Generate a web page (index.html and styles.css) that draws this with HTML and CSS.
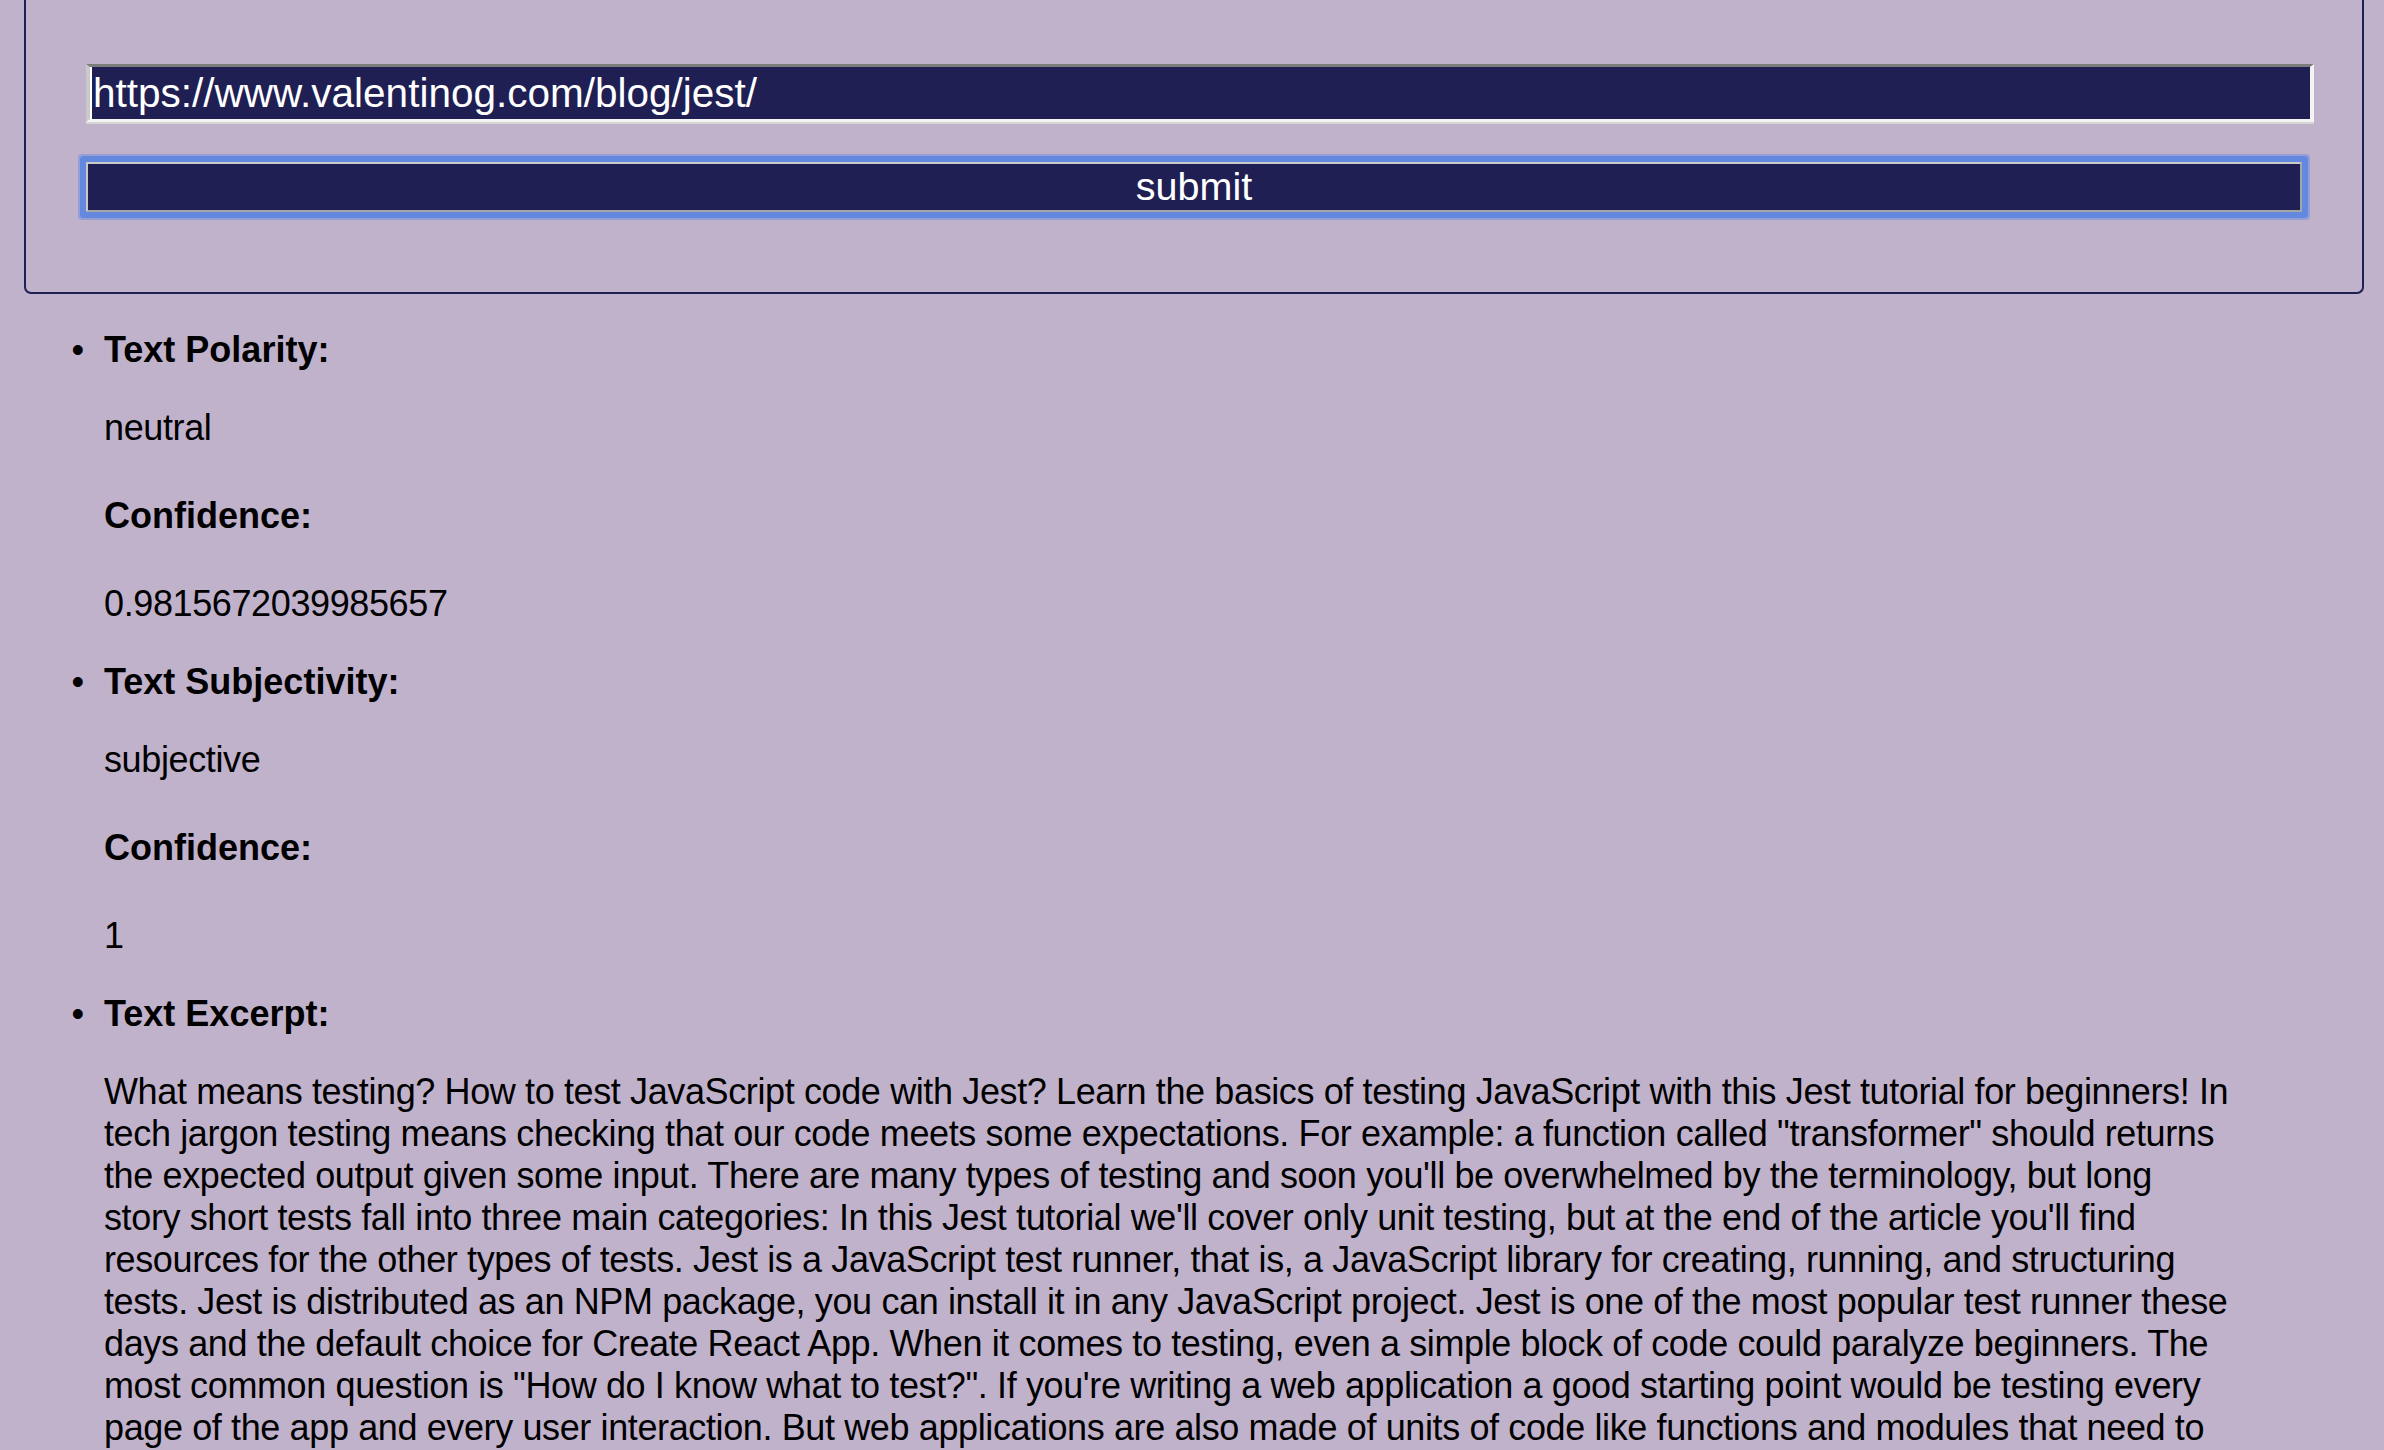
FILE: index.html
```html
<!DOCTYPE html>
<html lang="en">
<head>
<meta charset="utf-8">
<title>Sentiment Analysis</title>
<link rel="stylesheet" href="styles.css">
</head>
<body>
<form class="search-form">
  <fieldset class="panel">
    <input class="url-input" type="text" value="https://www.valentinog.com/blog/jest/">
    <button class="submit-btn" type="button">submit</button>
  </fieldset>
</form>
<ul class="results">
  <li class="result-item">
    <strong class="result-label">Text Polarity:</strong>
    <p class="result-value">neutral</p>
    <h4 class="result-sub">Confidence:</h4>
    <p class="result-value">0.9815672039985657</p>
  </li>
  <li class="result-item">
    <strong class="result-label">Text Subjectivity:</strong>
    <p class="result-value">subjective</p>
    <h4 class="result-sub">Confidence:</h4>
    <p class="result-value">1</p>
  </li>
  <li class="result-item">
    <strong class="result-label">Text Excerpt:</strong>
    <p class="result-value excerpt">What means testing? How to test JavaScript code with Jest? Learn the basics of testing JavaScript with this Jest tutorial for beginners! In tech jargon testing means checking that our code meets some expectations. For example: a function called "transformer" should returns the expected output given some input. There are many types of testing and soon you'll be overwhelmed by the terminology, but long story short tests fall into three main categories: In this Jest tutorial we'll cover only unit testing, but at the end of the article you'll find resources for the other types of tests. Jest is a JavaScript test runner, that is, a JavaScript library for creating, running, and structuring tests. Jest is distributed as an NPM package, you can install it in any JavaScript project. Jest is one of the most popular test runner these days and the default choice for Create React App. When it comes to testing, even a simple block of code could paralyze beginners. The most common question is "How do I know what to test?". If you're writing a web application a good starting point would be testing every page of the app and every user interaction. But web applications are also made of units of code like functions and modules that need to be tested too. There are two scenarios most of the times: you inherit legacy code which comes without tests, or you have to implement a new functionality out of thin air. What to do? For both cases you can help yourself by thinking of tests as of bits of code that check if a given function produces the expected result.</p>
  </li>
</ul>
</body>
</html>
```
FILE: styles.css
```css
html, body {
  margin: 0;
  padding: 0;
}

body {
  background: #c0b2cb;
  color: #000;
  font-family: "Liberation Sans", Arial, sans-serif;
  font-size: 36px;
  line-height: 42px;
}

.search-form {
  margin: 0 20px 0 24px;
}

.panel {
  margin: 0;
  padding: 64px 0 80px 60px;
  border: 2px solid #1f1f54;
  border-top: none;
  border-radius: 0 0 7px 7px;
  min-width: 0;
}

.url-input {
  display: block;
  box-sizing: border-box;
  width: 2228px;
  height: 58px;
  margin: 0;
  padding: 1px 2px 1px 3px;
  background: #1f1f54;
  color: #fff;
  font-family: "Liberation Sans", Arial, sans-serif;
  font-size: 40.5px;
  border-style: solid;
  border-width: 3px 4px 3px 4px;
  border-color: #7c7c7c #f4f4f4 #f4f4f4 #c9c9c9;
  box-shadow: inset 2px 0 0 #fff, 0 2px 0 #d6d6d6;
  outline: none;
}

.submit-btn {
  display: block;
  box-sizing: border-box;
  width: 2216px;
  height: 50px;
  margin: 40px 0 0;
  padding: 0;
  background: #1f1f54;
  color: #fff;
  font-family: "Liberation Sans", Arial, sans-serif;
  font-size: 39.5px;
  line-height: 1;
  border-style: solid;
  border-width: 2px;
  border-color: #c9c9c9 #a6a6a6 #a6a6a6 #c9c9c9;
  border-radius: 1px;
  box-shadow: 0 0 0 6px #6388e0, 0 0 0 8px rgba(99, 136, 224, 0.45);
}

.results {
  margin: 35px 152px 0 24px;
  padding: 0 0 0 80px;
  list-style: disc;
}

.result-item {
  margin: 0;
}

.result-item::marker {
  content: "\2022\00a0\00a0";
  font-weight: normal;
}

.result-label {
  font-weight: bold;
}

.result-value {
  margin: 36px 0;
  letter-spacing: -0.38px;
}

.result-sub {
  margin: 46px 0;
  font-size: 36px;
  font-weight: bold;
}
```
